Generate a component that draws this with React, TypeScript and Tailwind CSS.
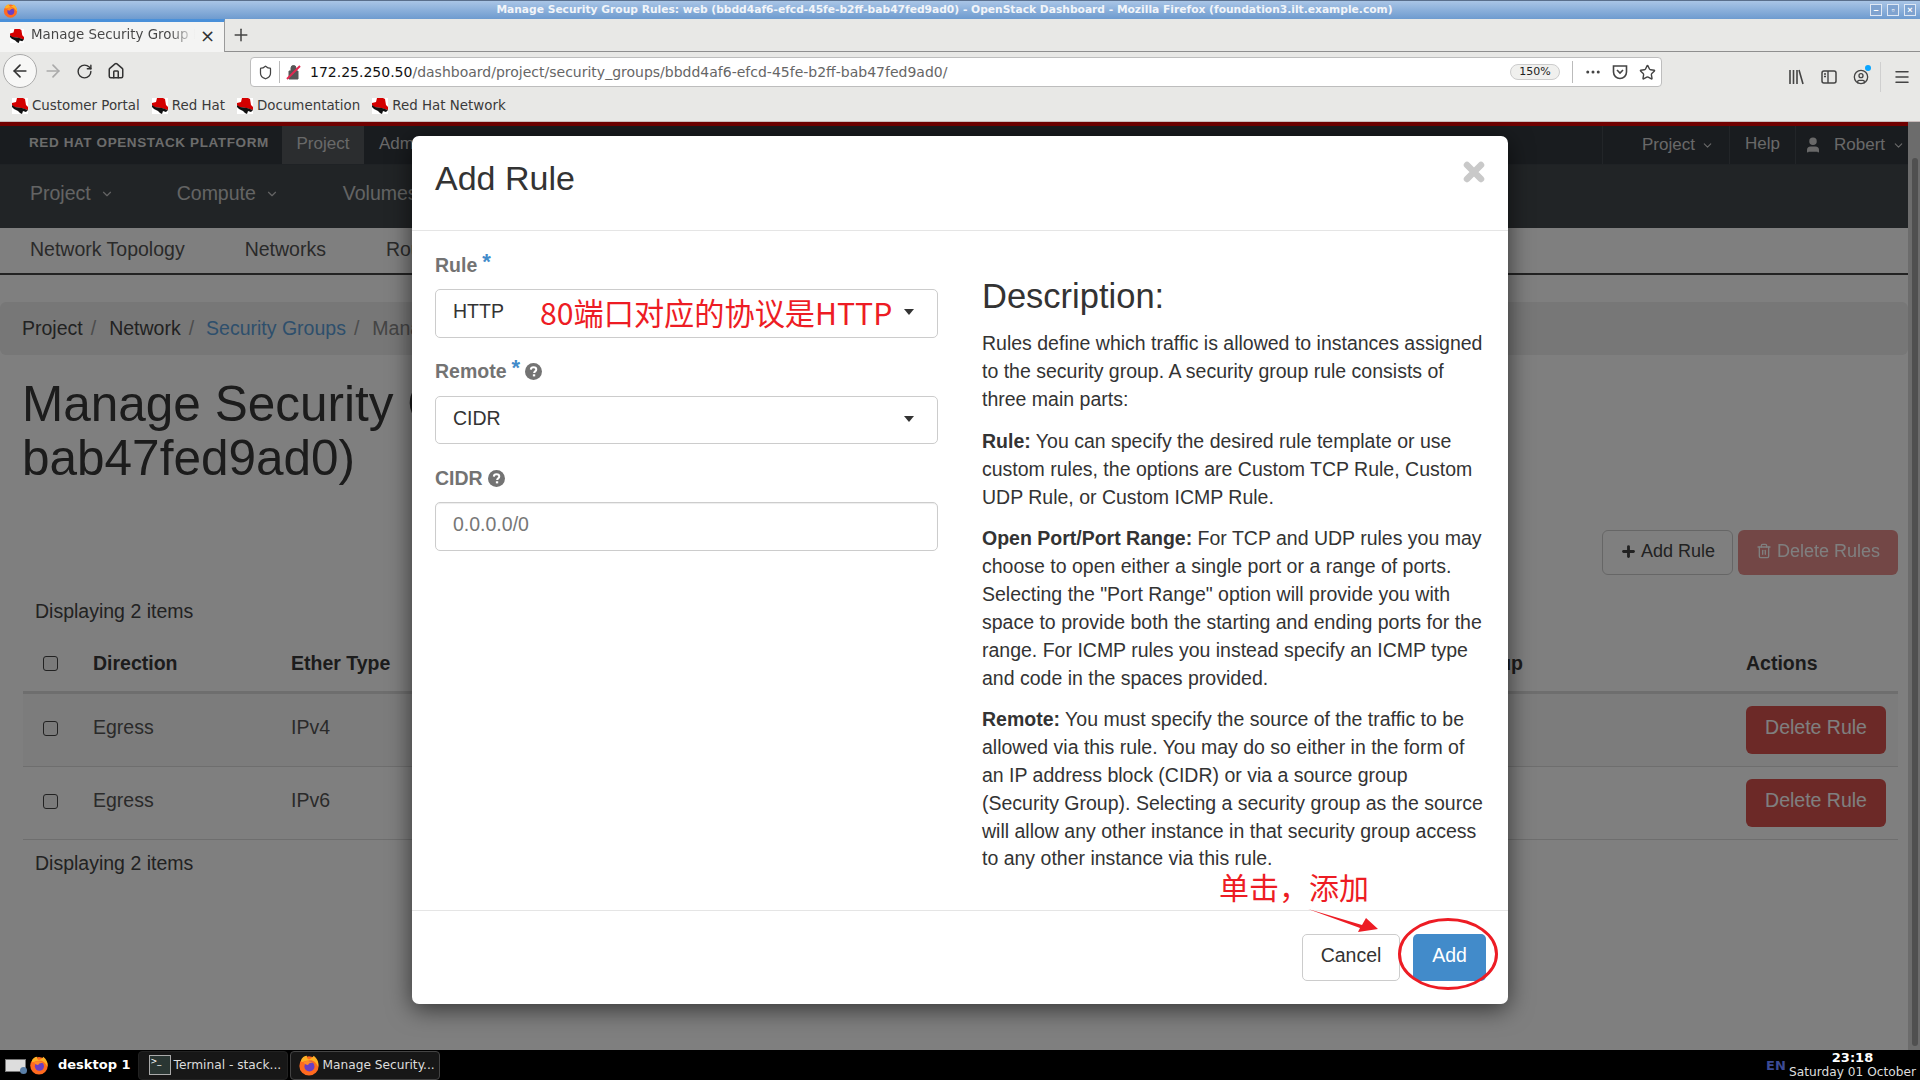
import { ArrowLeft, ArrowRight, ChevronDown, CircleUser, Home, Menu, MoreHorizontal, Plus, RotateCw, Shield, Star, Trash2, User } from "lucide-react";

const Firefox = ({ size = 20 }: { size?: number }) => (
  <svg width={size} height={size} viewBox="0 0 24 24">
    <circle cx="12" cy="13" r="10.5" fill="#ff6a1f" />
    <path d="M3 8C4 4 7 2 10 2c-1 2 0 3 2 4 3-1 5-3 5-4 4 3 6 7 5 12C20 9 16 6 12 7 7 7 5 10 3 8z" fill="#ffb125" />
    <circle cx="12.5" cy="13.5" r="5.5" fill="#6a3fc4" />
    <path d="M6 9c3-2 8-2 11 1-3-1-5 0-6 2-2 0-4-1-5-3z" fill="#ff8a2a" />
  </svg>
);

const RedHat = ({ size = 16 }: { size?: number }) => (
  <svg width={size} height={size} viewBox="0 0 16 16">
    <rect width="16" height="16" fill="#fff" />
    <path d="M0 5l4-1 1-4h6l2 1 1 6 2 2v3L9 10 2 9 0 7z" fill="#d40000" />
    <path d="M0 7l3 2 7 1 6 2-2 2-3-1-1 3-2-1-2-2-4-2-2-2z" fill="#111" />
  </svg>
);

const Bookmark = ({ label }: { label: string }) => (
  <div className="flex items-center gap-[4px]">
    <RedHat />
    <span className="text-[13.4px] text-[#3a3a3a]">{label}</span>
  </div>
);

const WinButton = ({ children }: { children: React.ReactNode }) => (
  <div className="w-[12px] h-[12px] border border-[#dfe8f4] bg-[#7fa3d0] flex items-center justify-center text-[9px] leading-none font-bold text-white">{children}</div>
);

const Checkbox = () => <div className="w-[15px] h-[15px] rounded-[3px] border border-[#444] bg-[#f4f4f4]" />;

const Row = ({ type, striped }: { type: string; striped?: boolean }) => (
  <div className={`grid grid-cols-[70px_198px_1455px_152px] items-center h-[73px] border-b border-[#ddd] ${striped ? "bg-[#f9f9f9]" : ""}`}>
    <div className="pl-[20px] pb-[4px]"><Checkbox /></div>
    <div className="pb-[4px]">Egress</div>
    <div className="pb-[4px]">{type}</div>
    <div className="pb-[1px]">
      <button className="w-[140px] h-[48px] rounded-[6px] bg-[#d9534f] text-white pb-[3px]">Delete Rule</button>
    </div>
  </div>
);

const HelpIcon = () => (
  <svg width="17" height="17" viewBox="0 0 16 16" className="inline-block">
    <circle cx="8" cy="8" r="8" fill="#737373" />
    <path d="M5.5 6.2C5.6 4.7 6.7 4 8 4c1.5 0 2.6.9 2.6 2.1 0 1.9-2 1.7-2 3.3" fill="none" stroke="#fff" strokeWidth="1.9" />
    <rect x="7.4" y="10.6" width="2.2" height="2" fill="#fff" />
  </svg>
);

const Caret = () => <div className="w-0 h-0 border-x-[5.5px] border-x-transparent border-t-[6px] border-t-[#333]" />;

export default function App() {
  return (
    <div className="w-[1920px] h-[1080px] overflow-hidden flex flex-col font-['Liberation_Sans',sans-serif] bg-white">
      {/* window title */}
      <div className="h-[19px] shrink-0 relative flex items-center justify-center pr-[31px] bg-gradient-to-b from-[#a9c5e6] to-[#6e9bcf] border-t border-[#5a6f8c]">
        <div className="absolute left-[3px] top-[2px]"><Firefox size={15} /></div>
        <span className="font-['DejaVu_Sans',sans-serif] font-bold text-[10.7px] text-[#f2f5f9]">
          Manage Security Group Rules: web (bbdd4af6-efcd-45fe-b2ff-bab47fed9ad0) - OpenStack Dashboard - Mozilla Firefox (foundation3.ilt.example.com)
        </span>
        <div className="absolute right-[4px] top-[3px] flex gap-[5px]">
          <WinButton>–</WinButton>
          <WinButton>▫</WinButton>
          <WinButton>×</WinButton>
        </div>
      </div>

      {/* browser chrome */}
      <div className="h-[103px] shrink-0 bg-[#e8e8e6] flex flex-col font-['DejaVu_Sans',sans-serif] border-b border-[#c8bcbc]">
        <div className="h-[33px] flex border-b border-[#8f8f8f]">
          <div className="w-[225px] h-[33px] bg-[#f4f4f3] border-t-[3px] border-t-[#4a90d9] border-r border-r-[#9a9a9a] flex items-center pl-[10px] pb-[3px]">
            <RedHat size={14} />
            <span className="ml-[7px] w-[164px] overflow-hidden whitespace-nowrap text-[13.4px] bg-gradient-to-r from-[#444] from-85% to-transparent bg-clip-text text-transparent">Manage Security Group Rules</span>
            <span className="ml-[5px] text-[18px] leading-none text-[#333]">×</span>
          </div>
          <Plus size={20} strokeWidth={1.8} className="ml-[6px] mt-[6px] text-[#444]" />
        </div>
        <div className="h-[38px] flex items-center relative">
          <div className="ml-[3px] w-[34px] h-[34px] rounded-full border border-[#aaa] bg-[#f7f7f6] flex items-center justify-center">
            <ArrowLeft size={20} className="text-[#333]" />
          </div>
          <ArrowRight size={20} className="ml-[6px] text-[#aaa]" />
          <RotateCw size={17} className="ml-[13px] text-[#333]" />
          <Home size={18} className="ml-[14px] text-[#333]" />
          <div className="absolute left-[250px] top-[5px] w-[1412px] h-[30px] rounded-[4px] bg-white border border-[#bdbdbd] flex items-center">
            <Shield size={15} className="ml-[7px] text-[#444]" />
            <div className="ml-[6px] w-px h-[22px] bg-[#bbb]" />
            <svg width="16" height="16" viewBox="0 0 16 16" className="ml-[6px]">
              <path d="M3 7h9v8H3zM5 7V4a2.5 2.5 0 015 0v3" fill="#555" stroke="#555" />
              <path d="M1 15L14 2" stroke="#e22850" strokeWidth="2" />
            </svg>
            <span className="ml-[8px] text-[14px] text-[#111]">172.25.250.50</span>
            <span className="text-[14px] text-[#666]">/dashboard/project/security_groups/bbdd4af6-efcd-45fe-b2ff-bab47fed9ad0/</span>
            <div className="ml-auto w-[50px] h-[16px] rounded-full bg-[#f0f0ee] border border-[#ccc] text-[11px] leading-[14px] text-center text-[#222]">150%</div>
            <div className="ml-[12px] w-px h-[22px] bg-[#bbb]" />
            <MoreHorizontal size={18} className="ml-[11px] text-[#444]" />
            <svg width="16" height="16" viewBox="0 0 16 16" className="ml-[10px]">
              <path d="M1.5 2h13v6a6.5 6.5 0 01-13 0z" fill="none" stroke="#444" strokeWidth="1.6" />
              <path d="M5 6l3 3 3-3" fill="none" stroke="#444" strokeWidth="1.6" />
            </svg>
            <Star size={17} strokeWidth={2} className="ml-[11px] mr-[5px] text-[#444]" />
          </div>
          <div className="absolute left-[1789px] top-[10px] flex items-center text-[#444]">
            <svg width="15" height="16" viewBox="0 0 15 16">
              <path d="M1 1v14M4.5 1v14M8 1v14M10 1l4 14" stroke="#444" strokeWidth="1.6" fill="none" />
            </svg>
            <svg width="16" height="16" viewBox="0 0 16 16" className="ml-[17px]">
              <rect x="1" y="2" width="14" height="12" rx="2" fill="none" stroke="#444" strokeWidth="1.5" />
              <path d="M7 2v12M3 5h2M3 7.5h2" stroke="#444" strokeWidth="1.4" />
            </svg>
            <div className="ml-[16px] relative">
              <CircleUser size={16} />
              <div className="absolute -top-[4px] -right-[2px] w-[6px] h-[6px] rounded-full bg-[#0aa5ff]" />
            </div>
            <div className="ml-[11px] w-px h-[30px] bg-[#cfcfcf]" />
            <Menu size={18} className="ml-[12px]" />
          </div>
        </div>
        <div className="flex-1 flex items-center pl-[12px] gap-[12px] pt-[1px]">
          <Bookmark label="Customer Portal" />
          <Bookmark label="Red Hat" />
          <Bookmark label="Documentation" />
          <Bookmark label="Red Hat Network" />
        </div>
      </div>

      {/* dashboard */}
      <div className="relative h-[928px] shrink-0 overflow-hidden flex">
        <div className="w-[1908px] shrink-0 flex flex-col text-[19.5px] text-[#555]">
          <div className="h-[4px] bg-[#e00000]" />
          <div className="h-[39px] bg-[#32383e] border-b border-[#3f454b] flex items-center text-[#d2d2d2] text-[17px]">
            <span className="ml-[29px] w-[253px] font-bold text-[13.5px] tracking-[0.6px] text-[#d8d8d8] pb-[4px]">RED HAT OPENSTACK PLATFORM</span>
            <div className="h-full w-[82px] bg-[#565a5e] flex items-center justify-center pb-[2px]">Project</div>
            <span className="ml-[15px] pb-[2px]">Admin</span>
            <div className="ml-auto h-full border-l border-[#454a50] w-[127px] flex items-center pl-[39px] gap-[6px]">
              Project <ChevronDown size={13} />
            </div>
            <div className="h-full border-l border-[#454a50] w-[66px] flex items-center justify-center pb-[2px]">Help</div>
            <div className="h-full border-l border-[#454a50] w-[113px] flex items-center pl-[8px] gap-[7px]">
              <User size={18} fill="#d2d2d2" /> <span className="ml-[5px]">Robert</span> <ChevronDown size={13} />
            </div>
          </div>
          <div className="h-[63px] bg-[#42484d] flex items-center text-[#c8c8c8] pb-[5px]">
            <span className="ml-[30px]">Project</span>
            <ChevronDown size={14} className="ml-[9px]" />
            <span className="ml-[63px]">Compute</span>
            <ChevronDown size={14} className="ml-[9px]" />
            <span className="ml-[64px]">Volumes</span>
          </div>
          <div className="h-[47px] border-b-2 border-[#444] flex items-center text-[#555] pb-[2px]">
            <span className="ml-[30px]">Network Topology</span>
            <span className="ml-[60px]">Networks</span>
            <span className="ml-[60px]">Routers</span>
          </div>
          <div className="mt-[27px] h-[53px] rounded-[6px] bg-[#eeeeee] flex items-center pl-[22px] gap-[8px] text-[#444]">
            <span>Project</span><span className="text-[#999]">/</span>
            <span className="ml-[5px]">Network</span><span className="text-[#999]">/</span>
            <span className="ml-[4px] text-[#5c9fd9]">Security Groups</span><span className="text-[#999]">/</span>
            <span className="ml-[5px] text-[#888]">Manage Security Group Rules</span>
          </div>
          <div className="ml-[22px] mt-[22px] w-[1100px] text-[49.5px] leading-[54px] text-[#383838]">
            <div className="whitespace-nowrap">Manage Security Group Rules: web (bbdd4af6-efcd-45fe-b2ff-</div>
            <div>bab47fed9ad0)</div>
          </div>
          <div className="mt-[45px] flex justify-end gap-[5px] pr-[10px] text-[18px]">
            <button className="w-[131px] h-[45px] rounded-[6px] border border-[#ccc] bg-white text-[#444] flex items-center justify-center gap-[4px] pb-[3px]">
              <Plus size={17} strokeWidth={4} />Add Rule
            </button>
            <button className="w-[160px] h-[45px] rounded-[6px] bg-[#d9534f] opacity-65 text-white flex items-center justify-center gap-[5px] pb-[3px]">
              <Trash2 size={16} />Delete Rules
            </button>
          </div>
          <div className="ml-[35px] mt-[22px] leading-[28px] text-[#444]">Displaying 2 items</div>
          <div className="ml-[23px] mr-[10px] mt-[9px]">
            <div className="grid grid-cols-[70px_198px_1455px_152px] items-center h-[60px] pt-[2px] border-b-[3px] border-[#ddd] font-bold text-[#383838]">
              <div className="pl-[20px]"><Checkbox /></div>
              <div>Direction</div>
              <div className="flex justify-between pr-[223px]"><span>Ether Type</span><span>Remote Security Group</span></div>
              <div>Actions</div>
            </div>
            <Row type="IPv4" striped />
            <Row type="IPv6" />
          </div>
          <div className="ml-[35px] mt-[9px] leading-[28px] text-[#444]">Displaying 2 items</div>
        </div>
        <div className="w-[12px] shrink-0 bg-[#d8d8d8] pt-[36px] pl-[4px] pr-[2px]">
          <div className="h-[888px] rounded-full bg-[#a0a0a0]" />
        </div>

        {/* overlay and modal */}
        <div className="absolute inset-0 bg-black/50" />
        <div className="absolute left-[412px] top-[14px] w-[1096px] h-[868px] bg-white rounded-[7px] shadow-[0_5px_25px_rgba(0,0,0,0.6)] flex flex-col text-[#333] text-[19.5px]">
          <div className="h-[95px] shrink-0 border-b border-[#e5e5e5] flex justify-between pl-[23px] pr-[23px]">
            <div className="mt-[20px] text-[34px] leading-[44px] text-[#333]">Add Rule</div>
            <svg width="22" height="22" viewBox="0 0 22 22" className="mt-[25px]">
              <path d="M4 4l14 14M18 4L4 18" stroke="#c9c9c9" strokeWidth="6.5" strokeLinecap="round" />
            </svg>
          </div>
          <div className="flex-1 flex pl-[23px]">
            <div className="w-[503px] shrink-0 flex flex-col pt-[20px]">
              <div className="font-bold text-[#737373] leading-[28px] flex">Rule<span className="ml-[5px] pt-[1px] text-[22px] text-[#428bca] leading-[20px]">*</span></div>
              <div className="mt-[10px] h-[49px] rounded-[5px] border border-[#ccc] flex items-center justify-between pl-[17px] pr-[23px] pb-[3px]">
                <span>HTTP</span><Caret />
              </div>
              <div className="mt-[19px] font-bold text-[#737373] leading-[28px] flex items-center">Remote<span className="ml-[5px] pt-[1px] text-[22px] text-[#428bca] leading-[20px] self-start">*</span><span className="ml-[5px] flex"><HelpIcon /></span></div>
              <div className="mt-[11px] h-[48px] rounded-[5px] border border-[#ccc] flex items-center justify-between pl-[17px] pr-[23px] pb-[3px]">
                <span>CIDR</span><Caret />
              </div>
              <div className="mt-[20px] font-bold text-[#737373] leading-[28px] flex items-center">CIDR<span className="ml-[5px] flex"><HelpIcon /></span></div>
              <div className="mt-[10px] h-[49px] rounded-[5px] border border-[#ccc] shadow-[inset_0_1px_1px_rgba(0,0,0,0.075)] flex items-center pl-[17px] pb-[3px] text-[#777]">
                0.0.0.0/0
              </div>
            </div>
            <div className="ml-[44px] w-[505px] pt-[43px] leading-[27.9px] text-[#333]">
              <div className="text-[34.5px] leading-[44px]">Description:</div>
              <p className="mt-[12px]">Rules define which traffic is allowed to instances assigned to the security group. A security group rule consists of three main parts:</p>
              <p className="mt-[14px]"><b>Rule:</b> You can specify the desired rule template or use custom rules, the options are Custom TCP Rule, Custom UDP Rule, or Custom ICMP Rule.</p>
              <p className="mt-[14px]"><b>Open Port/Port Range:</b> For TCP and UDP rules you may choose to open either a single port or a range of ports. Selecting the "Port Range" option will provide you with space to provide both the starting and ending ports for the range. For ICMP rules you instead specify an ICMP type and code in the spaces provided.</p>
              <p className="mt-[13px]"><b>Remote:</b> You must specify the source of the traffic to be allowed via this rule. You may do so either in the form of an IP address block (CIDR) or via a source group (Security Group). Selecting a security group as the source will allow any other instance in that security group access to any other instance via this rule.</p>
            </div>
          </div>
          <div className="h-[94px] shrink-0 border-t border-[#e5e5e5] flex justify-end gap-[13px] pt-[23px] pr-[22px]">
            <button className="w-[98px] h-[47px] rounded-[5px] border border-[#ccc] bg-white text-[#333] pb-[3px]">Cancel</button>
            <button className="w-[73px] h-[47px] rounded-[5px] bg-[#428bca] text-white pb-[3px]">Add</button>
          </div>
        </div>

        {/* red annotations */}
        <div className="absolute left-[540px] top-[167px] text-[30.2px] leading-[46px] text-[#ed1c24] whitespace-nowrap font-['Noto_Sans_CJK_SC',sans-serif]">80端口对应的协议是HTTP</div>
        <div className="absolute left-[1219px] top-[741px] text-[30px] leading-[46px] text-[#ed1c24] whitespace-nowrap font-['Noto_Sans_CJK_SC',sans-serif]">单击，添加</div>
        <svg className="absolute left-[1300px] top-[780px]" width="200" height="95" viewBox="0 0 200 95">
          <path d="M8 7L62 23 66 16 78 27 58 30 60 26z" fill="#ed1c24" />
          <ellipse cx="148" cy="52" rx="48.5" ry="34.5" fill="none" stroke="#ed1c24" strokeWidth="3" />
        </svg>
      </div>

      {/* panel */}
      <div className="h-[30px] shrink-0 bg-black flex items-center relative font-['DejaVu_Sans',sans-serif] text-[12.2px]">
        <div className="ml-[5px] w-[21px] h-[13px] bg-[#ddd] border border-[#777] relative">
          <div className="absolute -right-[2px] -bottom-[3px] w-[7px] h-[7px] rounded-full bg-[#5a7fa8]" />
        </div>
        <div className="ml-[3px]"><Firefox size={20} /></div>
        <span className="ml-[9px] font-bold text-[13px] text-white">desktop 1</span>
        <div className="ml-[7px] w-[150px] h-[29px] rounded-[4px] bg-[#171717] border border-[#222] flex items-center pl-[10px] text-[#ddd]">
          <div className="w-[22px] h-[20px] bg-[#2a3633] border border-[#aaa] text-[8px] text-white pl-[1px]">&gt;_</div>
          <span className="ml-[3px] whitespace-nowrap">Terminal - stack...</span>
        </div>
        <div className="ml-[2px] w-[150px] h-[29px] rounded-[4px] bg-[#171717] border border-[#444] flex items-center pl-[7px] text-[#ddd]">
          <Firefox size={22} />
          <span className="ml-[3px] whitespace-nowrap">Manage Security...</span>
        </div>
        <span className="absolute left-[1766px] top-[6px] font-bold text-[13px] text-[#3c4a94]">EN</span>
        <div className="ml-auto mr-[4px] flex flex-col items-center leading-[15px]">
          <span className="font-bold text-[13px] text-white">23:18</span>
          <span className="text-[#ddd]">Saturday 01 October</span>
        </div>
      </div>
    </div>
  );
}
